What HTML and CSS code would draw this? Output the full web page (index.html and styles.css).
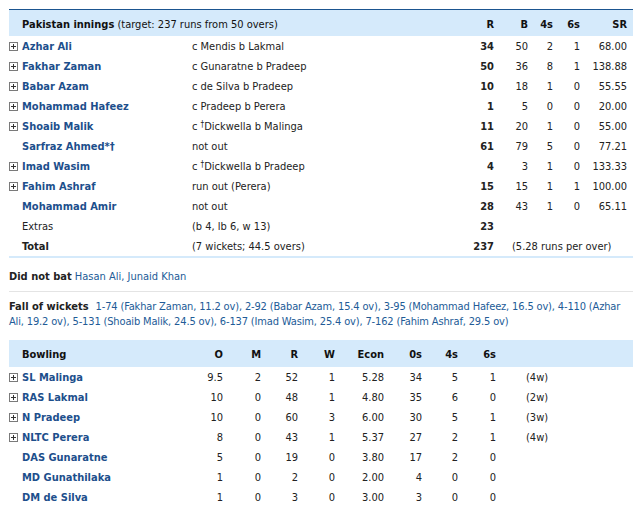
FILE: index.html
```html
<!DOCTYPE html>
<html>
<head>
<meta charset="utf-8">
<link rel="stylesheet" href="styles.css">
</head>
<body>
<div class="page">
  <div class="bat">
    <div class="row head">
      <div class="c-ic"></div>
      <div class="c-name span2"><b>Pakistan innings</b> (target: 237 runs from 50 overs)</div>
      <div class="num b">R</div>
      <div class="num b">B</div>
      <div class="num b">4s</div>
      <div class="num b">6s</div>
      <div class="num b">SR</div>
      <div></div>
    </div>

    <div class="row">
      <div class="c-ic"><svg class="plus" width="9" height="9" viewBox="0 0 9 9"><rect x="0.5" y="0.5" width="8" height="8" fill="#fff" stroke="#7a7a7a"/><path d="M2 4.5h5M4.5 2v5" stroke="#333" stroke-width="1"/></svg></div>
      <div class="link">Azhar Ali</div><div>c Mendis b Lakmal</div>
      <div class="num b">34</div><div class="num">50</div><div class="num">2</div><div class="num">1</div><div class="num">68.00</div><div></div>
    </div>
    <div class="row">
      <div class="c-ic"><svg class="plus" width="9" height="9" viewBox="0 0 9 9"><rect x="0.5" y="0.5" width="8" height="8" fill="#fff" stroke="#7a7a7a"/><path d="M2 4.5h5M4.5 2v5" stroke="#333" stroke-width="1"/></svg></div>
      <div class="link">Fakhar Zaman</div><div>c Gunaratne b Pradeep</div>
      <div class="num b">50</div><div class="num">36</div><div class="num">8</div><div class="num">1</div><div class="num">138.88</div><div></div>
    </div>
    <div class="row">
      <div class="c-ic"><svg class="plus" width="9" height="9" viewBox="0 0 9 9"><rect x="0.5" y="0.5" width="8" height="8" fill="#fff" stroke="#7a7a7a"/><path d="M2 4.5h5M4.5 2v5" stroke="#333" stroke-width="1"/></svg></div>
      <div class="link">Babar Azam</div><div>c de Silva b Pradeep</div>
      <div class="num b">10</div><div class="num">18</div><div class="num">1</div><div class="num">0</div><div class="num">55.55</div><div></div>
    </div>
    <div class="row">
      <div class="c-ic"><svg class="plus" width="9" height="9" viewBox="0 0 9 9"><rect x="0.5" y="0.5" width="8" height="8" fill="#fff" stroke="#7a7a7a"/><path d="M2 4.5h5M4.5 2v5" stroke="#333" stroke-width="1"/></svg></div>
      <div class="link">Mohammad Hafeez</div><div>c Pradeep b Perera</div>
      <div class="num b">1</div><div class="num">5</div><div class="num">0</div><div class="num">0</div><div class="num">20.00</div><div></div>
    </div>
    <div class="row">
      <div class="c-ic"><svg class="plus" width="9" height="9" viewBox="0 0 9 9"><rect x="0.5" y="0.5" width="8" height="8" fill="#fff" stroke="#7a7a7a"/><path d="M2 4.5h5M4.5 2v5" stroke="#333" stroke-width="1"/></svg></div>
      <div class="link">Shoaib Malik</div><div>c <sup class="dg">†</sup>Dickwella b Malinga</div>
      <div class="num b">11</div><div class="num">20</div><div class="num">1</div><div class="num">0</div><div class="num">55.00</div><div></div>
    </div>
    <div class="row">
      <div class="c-ic"></div>
      <div class="link">Sarfraz Ahmed*†</div><div>not out</div>
      <div class="num b">61</div><div class="num">79</div><div class="num">5</div><div class="num">0</div><div class="num">77.21</div><div></div>
    </div>
    <div class="row">
      <div class="c-ic"><svg class="plus" width="9" height="9" viewBox="0 0 9 9"><rect x="0.5" y="0.5" width="8" height="8" fill="#fff" stroke="#7a7a7a"/><path d="M2 4.5h5M4.5 2v5" stroke="#333" stroke-width="1"/></svg></div>
      <div class="link">Imad Wasim</div><div>c <sup class="dg">†</sup>Dickwella b Pradeep</div>
      <div class="num b">4</div><div class="num">3</div><div class="num">1</div><div class="num">0</div><div class="num">133.33</div><div></div>
    </div>
    <div class="row">
      <div class="c-ic"><svg class="plus" width="9" height="9" viewBox="0 0 9 9"><rect x="0.5" y="0.5" width="8" height="8" fill="#fff" stroke="#7a7a7a"/><path d="M2 4.5h5M4.5 2v5" stroke="#333" stroke-width="1"/></svg></div>
      <div class="link">Fahim Ashraf</div><div>run out (Perera)</div>
      <div class="num b">15</div><div class="num">15</div><div class="num">1</div><div class="num">1</div><div class="num">100.00</div><div></div>
    </div>
    <div class="row">
      <div class="c-ic"></div>
      <div class="link">Mohammad Amir</div><div>not out</div>
      <div class="num b">28</div><div class="num">43</div><div class="num">1</div><div class="num">0</div><div class="num">65.11</div><div></div>
    </div>
    <div class="row">
      <div class="c-ic"></div>
      <div>Extras</div><div>(b 4, lb 6, w 13)</div>
      <div class="num b">23</div><div class="rest"></div>
    </div>
    <div class="row total">
      <div class="c-ic"></div>
      <div class="b">Total</div><div>(7 wickets; 44.5 overs)</div>
      <div class="num b">237</div><div class="rest rpo">(5.28 runs per over)</div>
    </div>
  </div>

  <div class="dnb"><b>Did not bat</b> <span class="blue">Hasan Ali, Junaid Khan</span></div>

  <div class="fow"><b class="fow-t">Fall of wickets</b><span class="blue">1-74 (Fakhar Zaman, 11.2 ov), 2-92 (Babar Azam, 15.4 ov), 3-95 (Mohammad Hafeez, 16.5 ov), 4-110 (Azhar<br>Ali, 19.2 ov), 5-131 (Shoaib Malik, 24.5 ov), 6-137 (Imad Wasim, 25.4 ov), 7-162 (Fahim Ashraf, 29.5 ov)</span></div>

  <div class="bowl">
    <div class="brow bhead">
      <div></div><div class="b">Bowling</div>
      <div class="num b">O</div><div class="num b">M</div><div class="num b">R</div><div class="num b">W</div><div class="num b">Econ</div><div class="num b">0s</div><div class="num b">4s</div><div class="num b">6s</div><div></div>
    </div>
    <div class="brow">
      <div class="c-ic"><svg class="plus" width="9" height="9" viewBox="0 0 9 9"><rect x="0.5" y="0.5" width="8" height="8" fill="#fff" stroke="#7a7a7a"/><path d="M2 4.5h5M4.5 2v5" stroke="#333" stroke-width="1"/></svg></div>
      <div class="link">SL Malinga</div>
      <div class="num">9.5</div><div class="num">2</div><div class="num">52</div><div class="num">1</div><div class="num">5.28</div><div class="num">34</div><div class="num">5</div><div class="num">1</div><div class="note">(4w)</div>
    </div>
    <div class="brow">
      <div class="c-ic"><svg class="plus" width="9" height="9" viewBox="0 0 9 9"><rect x="0.5" y="0.5" width="8" height="8" fill="#fff" stroke="#7a7a7a"/><path d="M2 4.5h5M4.5 2v5" stroke="#333" stroke-width="1"/></svg></div>
      <div class="link">RAS Lakmal</div>
      <div class="num">10</div><div class="num">0</div><div class="num">48</div><div class="num">1</div><div class="num">4.80</div><div class="num">35</div><div class="num">6</div><div class="num">0</div><div class="note">(2w)</div>
    </div>
    <div class="brow">
      <div class="c-ic"><svg class="plus" width="9" height="9" viewBox="0 0 9 9"><rect x="0.5" y="0.5" width="8" height="8" fill="#fff" stroke="#7a7a7a"/><path d="M2 4.5h5M4.5 2v5" stroke="#333" stroke-width="1"/></svg></div>
      <div class="link">N Pradeep</div>
      <div class="num">10</div><div class="num">0</div><div class="num">60</div><div class="num">3</div><div class="num">6.00</div><div class="num">30</div><div class="num">5</div><div class="num">1</div><div class="note">(3w)</div>
    </div>
    <div class="brow">
      <div class="c-ic"><svg class="plus" width="9" height="9" viewBox="0 0 9 9"><rect x="0.5" y="0.5" width="8" height="8" fill="#fff" stroke="#7a7a7a"/><path d="M2 4.5h5M4.5 2v5" stroke="#333" stroke-width="1"/></svg></div>
      <div class="link">NLTC Perera</div>
      <div class="num">8</div><div class="num">0</div><div class="num">43</div><div class="num">1</div><div class="num">5.37</div><div class="num">27</div><div class="num">2</div><div class="num">1</div><div class="note">(4w)</div>
    </div>
    <div class="brow">
      <div class="c-ic"></div>
      <div class="link">DAS Gunaratne</div>
      <div class="num">5</div><div class="num">0</div><div class="num">19</div><div class="num">0</div><div class="num">3.80</div><div class="num">17</div><div class="num">2</div><div class="num">0</div><div class="note"></div>
    </div>
    <div class="brow">
      <div class="c-ic"></div>
      <div class="link">MD Gunathilaka</div>
      <div class="num">1</div><div class="num">0</div><div class="num">2</div><div class="num">0</div><div class="num">2.00</div><div class="num">4</div><div class="num">0</div><div class="num">0</div><div class="note"></div>
    </div>
    <div class="brow">
      <div class="c-ic"></div>
      <div class="link">DM de Silva</div>
      <div class="num">1</div><div class="num">0</div><div class="num">3</div><div class="num">0</div><div class="num">3.00</div><div class="num">3</div><div class="num">0</div><div class="num">0</div><div class="note"></div>
    </div>
  </div>
</div>
</body>
</html>
```

FILE: styles.css
```css
html, body {
  margin: 0;
  padding: 0;
  background: #fff;
}
body {
  font-family: Tahoma, "DejaVu Sans Condensed", "DejaVu Sans", sans-serif;
  font-size: 11px;
  color: #222;
}
.page {
  width: 624px;
  margin-left: 9px;
  padding-top: 9px;
}
.b { font-weight: bold; }
.blue { color: #225b97; }
.link { color: #1d4f8c; font-weight: bold; }
.num { text-align: right; }

.bat {
  border-bottom: 2px solid #d5eafb;
}
.row {
  display: grid;
  grid-template-columns: 13px 170px 262px 40px 34px 25px 27px 47px 6px;
  height: 20px;
  align-items: center;
  white-space: nowrap;
}
.row.head {
  box-sizing: border-box;
  height: 27px;
  padding-top: 3px;
  background: #d5eafb;
  border-top: 1px solid #1b5590;
  color: #111;
}
.span2 { grid-column: 2 / 4; }
.c-ic { display: flex; align-items: center; }
.plus { display: block; }
.dg { font-size: 8px; vertical-align: 3px; line-height: 0; }
.rest { grid-column: 5 / -1; }
.rpo { padding-left: 18px; }

.dnb {
  padding: 12px 0 7px 0;
  line-height: 14px;
  border-bottom: 1px solid #e4e4e4;
  white-space: nowrap;
}
.fow {
  padding-top: 7px;
  line-height: 15px;
  white-space: nowrap;
}
.fow-t { margin-right: 7px; }
.fow .blue { letter-spacing: -0.15px; }

.bowl {
  margin-top: 11px;
}
.brow {
  display: grid;
  grid-template-columns: 13px 161px 40px 38px 37px 37px 49px 38px 36px 38px 1fr;
  height: 20px;
  align-items: center;
  white-space: nowrap;
}
.brow.bhead {
  box-sizing: border-box;
  height: 27px;
  padding-top: 1px;
  background: #d5eafb;
  color: #111;
}
.note { padding-left: 30px; }
```
